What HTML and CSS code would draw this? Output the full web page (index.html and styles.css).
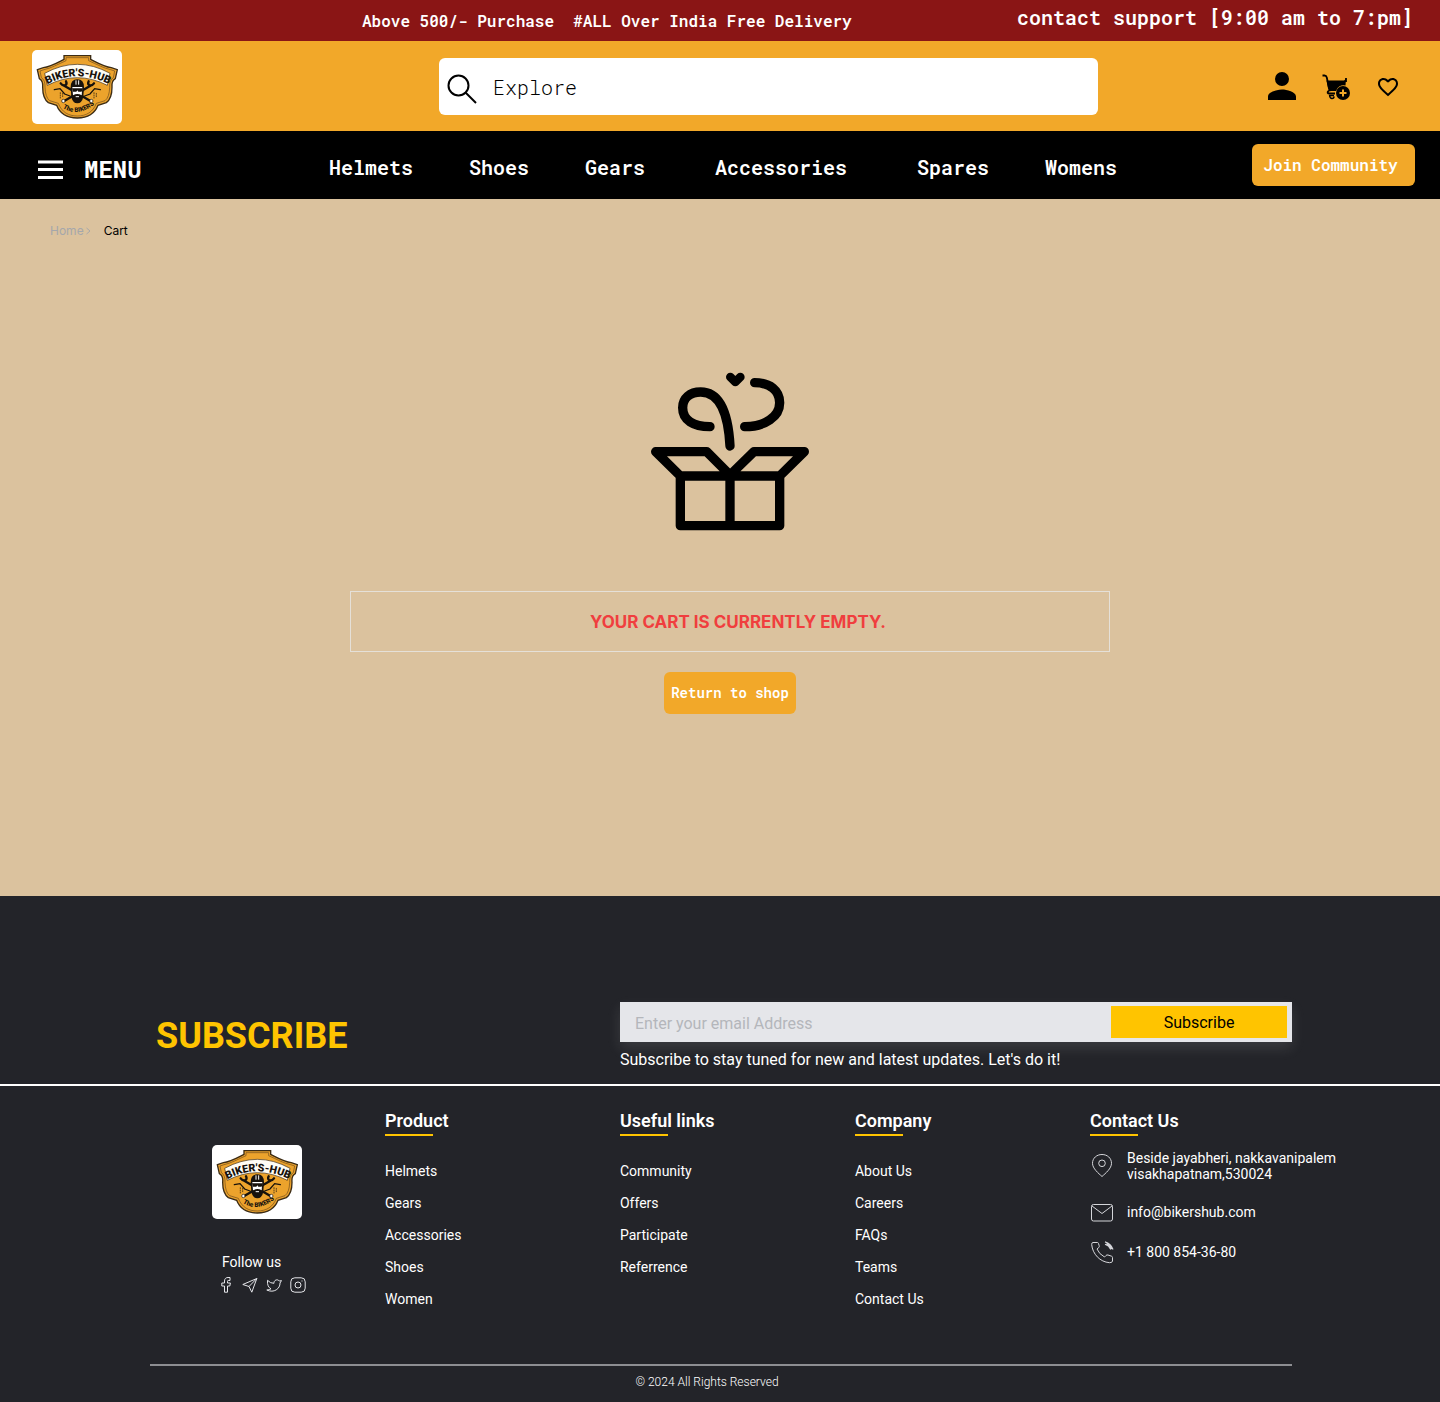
FILE: index.html
```html
<!DOCTYPE html>
<html lang="en">
<head>
<meta charset="utf-8">
<title>Biker's Hub - Cart</title>
<meta name="viewport" content="width=device-width, initial-scale=1">
<link rel="stylesheet" href="styles.css">
</head>
<body>
<div class="promo">
  <p class="promo-offer">Above 500/- Purchase&nbsp; #ALL Over India Free Delivery</p>
  <p class="promo-support">contact support [9:00 am to 7:pm]</p>
</div>

<header class="header">
  <a class="logo" href="#" aria-label="Biker's Hub">
    <svg viewBox="36 18 270 222">
      <g id="logo">
        <path d="M132 35H212V46C232 56 252 68 274 71L292 77L286 104Q274 110 276 130Q276 164 259 176L234 184C224 210 202 222 172 222C142 222 120 210 110 184L85 176Q68 164 68 130Q70 110 58 104L52 77L70 71C92 68 112 56 132 46Z" fill="#eca32c" stroke="#3c2c15" stroke-width="4"/>
        <path d="M138 41H206V50C230 61 252 73 272 77L284 81L280 101Q268 108 269 130Q268 160 255 170L229 178C219 204 199 216 172 216C145 216 125 204 115 178L89 170Q76 160 75 130Q76 108 64 101L60 81L72 77C92 73 114 61 138 50Z" fill="none" stroke="#6d4a1c" stroke-width="2"/>
        <path d="M74 88Q172 34 270 88L262 124Q172 78 82 124Z" fill="#fffdf5" stroke="#3c2c15" stroke-width="2"/>
        <path id="arc-top" d="M82 121Q172 71 274 124" fill="none"/>
        <path id="arc-low" d="M128 192Q176 222 230 176" fill="none"/>
        <text class="logo-name"><textPath href="#arc-top">BIKER'S-HUB</textPath></text>
        <text class="logo-sub"><textPath href="#arc-low">The BIKERS</textPath></text>
        <g fill="none" stroke="#17120c" stroke-linecap="round">
          <path d="M134 126L210 170M210 126L134 170" stroke-width="7"/>
          <path d="M103 137L120 134L134 150L150 156M241 137L224 134L210 150L194 156" stroke-width="4"/>
          <path d="M122 118Q128 126 136 124Q142 120 138 112M222 118Q216 126 208 124Q202 120 206 112" stroke-width="7"/>
          <path d="M121 146V162M128 148V162M222 146V162M229 148V162" stroke-width="2" stroke-dasharray="3 4"/>
        </g>
        <circle cx="130" cy="171" r="5" fill="#fff" stroke="#17120c" stroke-width="2"/>
        <circle cx="214" cy="171" r="5" fill="#fff" stroke="#17120c" stroke-width="2"/>
        <path d="M152 130Q152 106 172 106Q192 106 192 130L190 158Q186 177 172 178Q158 177 154 158Z" fill="#17120c"/>
        <path d="M157 129H187L185 154Q172 146 159 154Z" fill="#fff"/>
        <path d="M156 133H188L185 143H175L172 139L169 143H159Z" fill="#17120c"/>
        <path d="M168 109V122M176 109V122M167 158H177" stroke="#fff" stroke-width="3"/>
      </g>
    </svg>
  </a>
  <form class="search" role="search">
    <svg class="search-icon" viewBox="0 0 30 30" fill="none" stroke="#000" stroke-width="2" aria-hidden="true"><circle cx="11.500" cy="11.500" r="10"/><path d="M18.500 18.500L29 29"/></svg>
    <input class="search-input" type="search" placeholder="Explore" aria-label="Explore">
  </form>
  <div class="actions">
    <a href="#" aria-label="Account"><svg width="28" height="28" viewBox="4 4 16 16"><path d="M12 12a4 4 0 1 0 0-8 4 4 0 0 0 0 8zm0 2c-2.670 0-8 1.340-8 4v2h16v-2c0-2.660-5.330-4-8-4z"/></svg></a>
    <a href="#" aria-label="Cart"><svg width="28" height="28" viewBox="0 0 28 28"><path d="M4.500 8.500H22L24 7L23.500 13.500A7.500 7.500 0 0 0 14 19H8L6 16Z"/><path d="M.5 3.500H2.500Q4.300 3.500 4.800 5.500L7.500 18.500Q5.500 19 5.700 20.800Q6 21.500 7.500 21.500H13M24 6V10" fill="none" stroke="#000" stroke-width="1.800"/><path d="M7 23.500H12M7.500 23.500Q8 26.500 10 26.500Q12 26.500 12 24.500" fill="none" stroke="#000" stroke-width="1.500"/><circle cx="21" cy="21" r="7"/><path d="M21 17.500V24.500M17.500 21H24.500" stroke="#f2a829" stroke-width="2"/></svg></a>
    <a href="#" aria-label="Wishlist"><svg class="heart" width="24" height="24" viewBox="0 0 24 24"><path d="M16.500 3c-1.740 0-3.410.81-4.500 2.090C10.910 3.810 9.240 3 7.500 3 4.420 3 2 5.420 2 8.500c0 3.780 3.400 6.860 8.550 11.540L12 21.350l1.450-1.320C18.600 15.360 22 12.280 22 8.500 22 5.420 19.580 3 16.500 3zm-4.400 15.550l-.1.100-.1-.1C7.140 14.240 4 11.390 4 8.500 4 6.500 5.500 5 7.500 5c1.540 0 3.040.99 3.570 2.360h1.870C13.460 5.990 14.960 5 16.500 5c2 0 3.500 1.500 3.500 3.500 0 2.890-3.140 5.740-7.900 10.050z"/></svg></a>
  </div>
</header>

<nav class="nav" aria-label="Main">
  <button class="menu" type="button"><svg width="25" height="19" viewBox="0 0 25 19" stroke="#fff" stroke-width="3" aria-hidden="true"><path d="M0 2H25M0 9.500H25M0 17.500H25"/></svg>MENU</button>
  <div class="nav-links">
    <a href="#">Helmets</a><a href="#">Shoes</a><a href="#">Gears</a><a class="nav-wide" href="#">Accessories</a><a href="#">Spares</a><a href="#">Womens</a>
  </div>
  <button class="btn btn-join" type="button">Join Community</button>
</nav>

<main class="main">
  <nav class="crumbs" aria-label="Breadcrumb">
    <a href="#">Home</a>
    <svg width="5" height="8" viewBox="0 0 5 8" fill="none" stroke="#a5a7ab" aria-hidden="true"><path d="M.5 1L4 4L.5 7"/></svg>
    <span>Cart</span>
  </nav>
  <section class="empty">
    <svg class="gift" viewBox="60 36 480 480" fill="none" stroke="#000" stroke-width="28" stroke-linecap="round" stroke-linejoin="round" aria-hidden="true">
      <path d="M151 348H449V497H151ZM300 348V497M151 348L77 275H230L300 345L372 275H523L449 348"/>
      <path d="M240 200C190 200 158 180 158 143C158 115 180 96 212 96C270 96 295 165 300 258M374 68C420 68 449 92 449 128C449 170 405 200 344 200"/>
      <path d="M301 51L316 66L331 51" stroke-width="26"/>
    </svg>
    <h1 class="empty-msg">YOUR CART IS CURRENTLY EMPTY.</h1>
    <button class="btn btn-return" type="button">Return to shop</button>
  </section>
</main>

<footer class="footer">
  <section class="subscribe">
    <h2>SUBSCRIBE</h2>
    <div>
      <form class="subscribe-form">
        <input type="email" placeholder="Enter your email Address" aria-label="Email address">
        <button type="button">Subscribe</button>
      </form>
      <p>Subscribe to stay tuned for new and latest updates. Let's do it!</p>
    </div>
  </section>
  <div class="columns">
    <div class="brand">
      <a class="logo" href="#" aria-label="Biker's Hub"><svg viewBox="36 18 270 222"><use href="#logo"/></svg></a>
      <p>Follow us</p>
      <div class="social">
        <a href="#" aria-label="Facebook"><svg viewBox="0 0 16 16"><path d="M12 .5H10C7.800.5 6.500 1.900 6.500 4V6H3.800V9H6.500V15.200H9.500V9H11.800L12.400 6H9.500V4.300Q9.500 3.500 10.300 3.500H12Z"/></svg></a>
        <a href="#" aria-label="Telegram"><svg viewBox="0 0 16 16"><path d="M.8 7.500L14.800 1.500L9.800 15.200L7 9.500ZM7 9.500L14.800 1.500"/></svg></a>
        <a href="#" aria-label="Twitter"><svg viewBox="0 0 16 16"><path d="M.8 13Q3.500 13 5 11.800Q1 10 1.500 3.300Q4.500 6.500 8 6.300C7.600 3.200 11.500 1.600 13.200 4L15.500 3.600L14 6C14.300 11.500 8 16.500.8 13Z"/></svg></a>
        <a href="#" aria-label="Instagram"><svg viewBox="0 0 16 16"><rect x=".8" y=".8" width="14.400" height="14.400" rx="4"/><circle cx="8" cy="8" r="3"/><path d="M11.500 4H12.500"/></svg></a>
      </div>
    </div>
    <div class="col">
      <h3>Product</h3>
      <ul class="links"><li><a href="#">Helmets</a></li><li><a href="#">Gears</a></li><li><a href="#">Accessories</a></li><li><a href="#">Shoes</a></li><li><a href="#">Women</a></li></ul>
    </div>
    <div class="col">
      <h3>Useful links</h3>
      <ul class="links"><li><a href="#">Community</a></li><li><a href="#">Offers</a></li><li><a href="#">Participate</a></li><li><a href="#">Referrence</a></li></ul>
    </div>
    <div class="col">
      <h3>Company</h3>
      <ul class="links"><li><a href="#">About Us</a></li><li><a href="#">Careers</a></li><li><a href="#">FAQs</a></li><li><a href="#">Teams</a></li><li><a href="#">Contact Us</a></li></ul>
    </div>
    <div class="col">
      <h3>Contact Us</h3>
      <ul class="contact">
        <li class="address"><svg viewBox="0 0 24 24"><path d="M12 22.500C8.500 19.300 2.500 14.500 2.500 9.300C2.500 4 6.800.5 12 .5S21.500 4 21.500 9.300C21.500 14.500 15.500 19.300 12 22.500Z"/><circle cx="12" cy="9.300" r="3.300"/></svg><span>Beside jayabheri, nakkavanipalem<br>visakhapatnam,530024</span></li>
        <li><svg viewBox="0 0 24 24"><rect x="1.500" y="4.500" width="21" height="16.500" rx="2"/><path d="M2 6L12 13.500L22 6"/></svg><a href="#">info@bikershub.com</a></li>
        <li><svg viewBox="0 0 24 24"><path d="M7.500 2.500H3Q1.500 2.700 1.700 4.500C2.500 14 10 22 19.500 22.700Q22.400 22.800 22.500 21V17.500Q22.500 16.500 21.500 16.200L18 15Q16.800 14.700 16 15.500L14.500 17Q9 14 7 9L8.800 7.500Q9.500 6.800 9.200 5.800L8.500 3.500Q8.200 2.500 7.500 2.500Z"/><path d="M15 1.800Q21 3.500 23 9.500M15 4.300Q19 5.500 20.800 9.500M16.500 3.500Q20 5 21.800 9" stroke-width="1.200"/></svg><a href="#">+1 800 854-36-80</a></li>
      </ul>
    </div>
  </div>
  <p class="copyright">© 2024 All Rights Reserved</p>
</footer>
</body>
</html>
```
FILE: styles.css
```css
* { box-sizing: border-box; }

body {
  margin: 0;
  background: #232429;
  color: #fff;
  font-family: Roboto, "Liberation Sans", sans-serif;
}

h1, h2, h3, p, ul { margin: 0; padding: 0; }
ul { list-style: none; }
a { color: inherit; text-decoration: none; }
button, input { font: inherit; border: 0; }
svg { display: block; }

.promo, .header, .nav, .btn {
  font-family: "Roboto Mono", "Liberation Mono", monospace;
  white-space: nowrap;
}

/* Promo bar */
.promo {
  display: flex;
  justify-content: space-between;
  align-items: flex-start;
  min-height: 41px;
  padding: 5px 27px 8px 25%;
  background: #8a1515;
  font-weight: 600;
}
.promo-offer { padding: 4px 0 0 2px; font-size: 16px; line-height: 24px; }
.promo-support { font-size: 20px; line-height: 24px; }

/* Header */
.header {
  display: grid;
  grid-template-columns: 407fr 659fr 302fr;
  align-items: center;
  min-height: 90px;
  padding: 7px 40px 7px 32px;
  background: #f2a829;
}
.logo {
  display: block;
  width: 90px;
  height: 74px;
  overflow: hidden;
  border-radius: 5px;
  background: #fff;
}
.header .logo { margin-top: 2px; }
.logo svg { width: 100%; height: 100%; }
.logo-name { font: 900 32px Roboto, sans-serif; fill: #17120c; }
.logo-sub { font: 900 19px Roboto, sans-serif; fill: #17120c; }

.search {
  display: flex;
  align-items: center;
  gap: 16px;
  height: 57px;
  padding: 0 8px;
  border-radius: 6px;
  background: #fff;
}
.search-icon { width: 30px; height: 30px; flex: none; margin-top: 5px; }
.search-input {
  flex: 1;
  min-width: 0;
  padding: 2px 0 0;
  outline: 0;
  background: none;
  color: #000;
  font-size: 20px;
  font-weight: 350;
}
.search-input::placeholder { color: #000; opacity: 1; }
.actions { display: flex; justify-content: flex-end; align-items: center; gap: 26px; }
.heart { margin-top: 2px; }

/* Navigation */
.nav {
  display: grid;
  grid-template-columns: 291px 1fr auto;
  align-items: center;
  min-height: 68px;
  padding: 0 25px 0 38px;
  background: #000;
  font-weight: 600;
}
.menu {
  display: flex;
  align-items: center;
  gap: 21px;
  padding: 8px 0 0;
  background: none;
  color: #fff;
  font-size: 24px;
  font-weight: 700;
}
.nav-links { display: flex; gap: 56px; padding-top: 4px; font-size: 20px; }
.nav-wide { padding: 0 14px; }

.btn {
  height: 42px;
  border-radius: 6px;
  background: #f2a829;
  color: #fff;
  font-weight: 600;
}
.btn-join { width: 163px; padding: 0 6px 2px 0; font-size: 16px; }
.btn-return { width: 132px; padding: 0 0 2px; font-size: 14px; }

/* Cart */
.main {
  padding: 24px 0 182px;
  background: #dbc29e;
  color: #000;
  font-family: Inter, "Liberation Sans", sans-serif;
}
.crumbs {
  display: flex;
  align-items: center;
  gap: 2px;
  padding-left: 50px;
  font-size: 12px;
  line-height: 16px;
}
.crumbs a { color: #a5a7ab; }
.crumbs span { margin-left: 11px; }
.empty {
  display: flex;
  flex-direction: column;
  align-items: center;
  padding: 133px 0 0 20px;
}
.gift { width: 160px; height: 160px; }
.empty-msg {
  width: 100%;
  max-width: 760px;
  margin: 59px 0 20px;
  padding: 18px 0 17px 16px;
  border: 1px solid #e5e0d8;
  color: #f03e3e;
  font-size: 17px;
  font-weight: 700;
  line-height: 24px;
  text-align: center;
}

/* Footer */
.footer { padding: 106px 0 12px; }
.subscribe {
  display: grid;
  grid-template-columns: 470fr 672fr;
  align-items: center;
  padding: 0 148px 14px 150px;
  border-bottom: 2px solid #fff;
}
.subscribe h2 {
  padding-left: 6px;
  color: #ffc400;
  font-size: 36px;
  font-weight: 700;
  line-height: 40px;
}
.subscribe p { margin-top: 8px; font-size: 16px; line-height: 20px; }
.subscribe-form {
  display: flex;
  height: 40px;
  padding: 4px 5px 4px 4px;
  background: #e5e6ea;
  box-shadow: 0 6px 14px rgba(229, 230, 234, 0.12);
}
.subscribe-form input {
  flex: 1;
  min-width: 0;
  padding: 3px 11px 0;
  outline: 0;
  background: none;
  font-size: 16px;
}
.subscribe-form input::placeholder { color: #b4b6bb; opacity: 1; }
.subscribe-form button { width: 176px; padding: 0; background: #ffc400; color: #000; font-size: 16px; }

.columns {
  display: grid;
  grid-template-columns: repeat(4, 235fr) 246fr;
  padding: 23px 104px 0 150px;
  font-size: 14px;
  line-height: 16px;
}
.brand { padding: 36px 0 0 62px; }
.brand p { margin-top: 35px; padding-left: 10px; }
.social { display: flex; gap: 8px; padding: 7px 0 0 6px; }
.social svg { width: 16px; height: 16px; fill: none; stroke: #e5e6ea; stroke-width: 1; }

.col h3 { font-size: 18px; font-weight: 600; line-height: 24px; }
.col h3::after { content: ""; display: block; width: 48px; height: 2px; margin-top: 1px; background: #ffc400; }
.links { padding-top: 19px; line-height: 32px; }
.contact { display: grid; gap: 16px; padding-top: 14px; }
.contact li { display: flex; align-items: center; gap: 13px; min-height: 24px; white-space: nowrap; }
.contact .address { margin-bottom: 2px; }
.contact svg { flex: none; width: 24px; height: 24px; fill: none; stroke: #d5d6da; stroke-width: 1; }

.copyright {
  margin: 49px 148px 0 150px;
  padding: 8px 28px 0 0;
  border-top: 2px solid #8d8e92;
  font-size: 12px;
  font-weight: 300;
  line-height: 16px;
  text-align: center;
}
```
